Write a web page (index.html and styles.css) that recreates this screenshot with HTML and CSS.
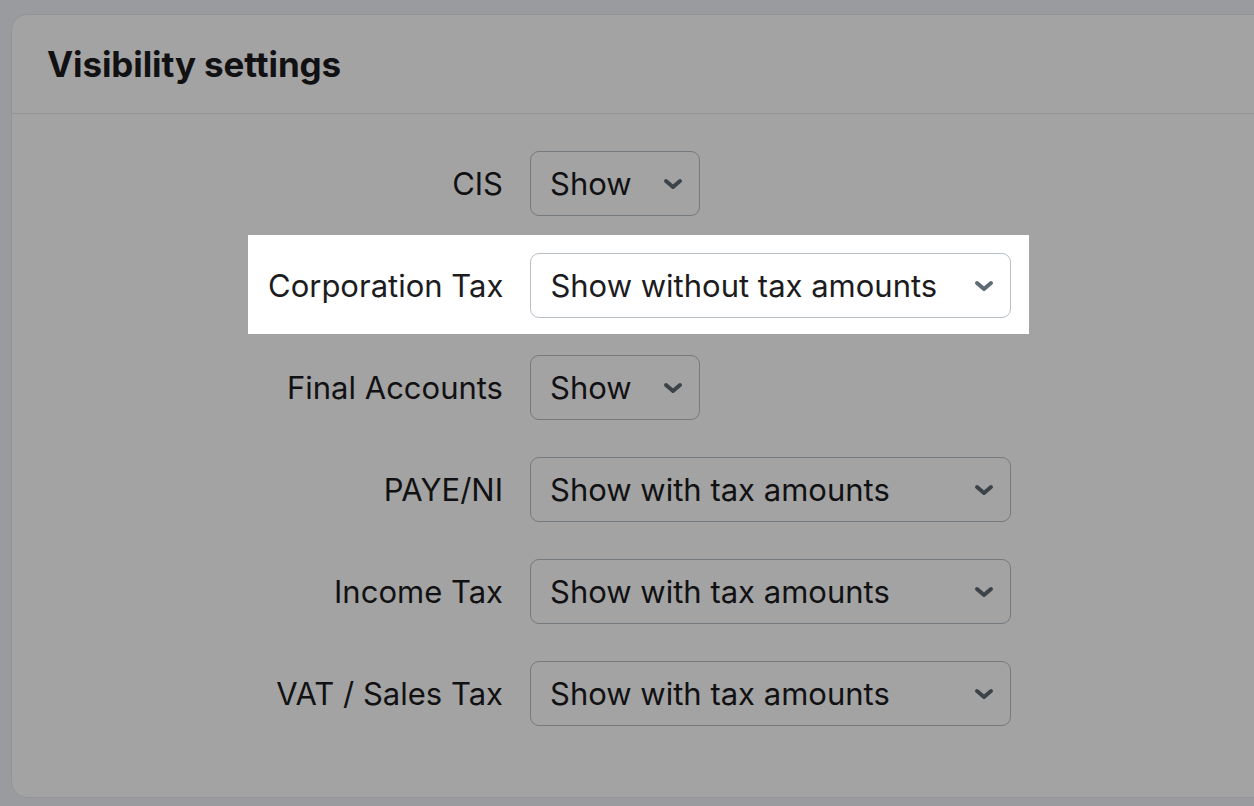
FILE: index.html
```html
<!DOCTYPE html>
<html lang="en">
<head>
    <meta charset="UTF-8">
    <meta name="viewport" content="width=device-width, initial-scale=1.0">
    <title>Visibility settings</title>
    <link rel="stylesheet" href="styles.css">
</head>
<body>
    <div class="panel">
        <div class="panel-header">
            <h2>Visibility settings</h2>
        </div>
        <div class="panel-body">
            <div class="row">
                <label>CIS</label>
                <div class="select short"><span>Show</span><svg class="chevron" viewBox="0 0 20 12"><path d="M3 3 L10 9 L17 3"/></svg></div>
            </div>
            <div class="row spotlight">
                <label>Corporation Tax</label>
                <div class="select wide"><span>Show without tax amounts</span><svg class="chevron" viewBox="0 0 20 12"><path d="M3 3 L10 9 L17 3"/></svg></div>
            </div>
            <div class="row">
                <label>Final Accounts</label>
                <div class="select short"><span>Show</span><svg class="chevron" viewBox="0 0 20 12"><path d="M3 3 L10 9 L17 3"/></svg></div>
            </div>
            <div class="row">
                <label>PAYE/NI</label>
                <div class="select wide"><span>Show with tax amounts</span><svg class="chevron" viewBox="0 0 20 12"><path d="M3 3 L10 9 L17 3"/></svg></div>
            </div>
            <div class="row">
                <label>Income Tax</label>
                <div class="select wide"><span>Show with tax amounts</span><svg class="chevron" viewBox="0 0 20 12"><path d="M3 3 L10 9 L17 3"/></svg></div>
            </div>
            <div class="row">
                <label>VAT / Sales Tax</label>
                <div class="select wide"><span>Show with tax amounts</span><svg class="chevron" viewBox="0 0 20 12"><path d="M3 3 L10 9 L17 3"/></svg></div>
            </div>
        </div>
    </div>
    <div class="dim"></div>
</body>
</html>
```

FILE: styles.css
```css
body { margin: 0; padding: 14px 0 0 11px; background: #f0f3f7; font-family: Inter, "Noto Sans", sans-serif; color: #1c1c1e; overflow: hidden; height: 806px; box-sizing: border-box; }
.panel { width: 1300px; background: #fff; border: 1px solid #e6e8eb; border-radius: 16px; }
.panel-header { height: 98px; display: flex; align-items: center; padding-left: 35px; border-bottom: 1px solid #e6e8eb; }
.panel-header h2 { margin: 0; font-size: 35px; font-weight: 700; letter-spacing: -0.1px; }
.panel-body { padding: 19px 0 55px 236px; display: flex; flex-direction: column; gap: 3px; }
.row { display: flex; align-items: center; gap: 27px; width: fit-content; padding: 18px 18px 16px 20px; }
.row label { flex: 0 0 235px; white-space: nowrap; text-align: right; font-size: 31px; }
.select { flex: none; height: 65px; box-sizing: border-box; display: flex; align-items: center; justify-content: space-between; padding: 0 16px 0 19px; border: 1.5px solid #b8bfc5; border-radius: 9px; background: #fff; font-size: 31px; white-space: nowrap; }
.select.short { width: 170px; }
.select.wide { width: 481px; }
.chevron { width: 20px; height: 12px; fill: none; stroke: #5f6b73; stroke-width: 4; stroke-linecap: round; stroke-linejoin: round; }
.dim { position: fixed; inset: 0; background: rgba(0, 0, 0, 0.36); z-index: 1; }
.spotlight { position: relative; z-index: 2; background: #fff; }
```
